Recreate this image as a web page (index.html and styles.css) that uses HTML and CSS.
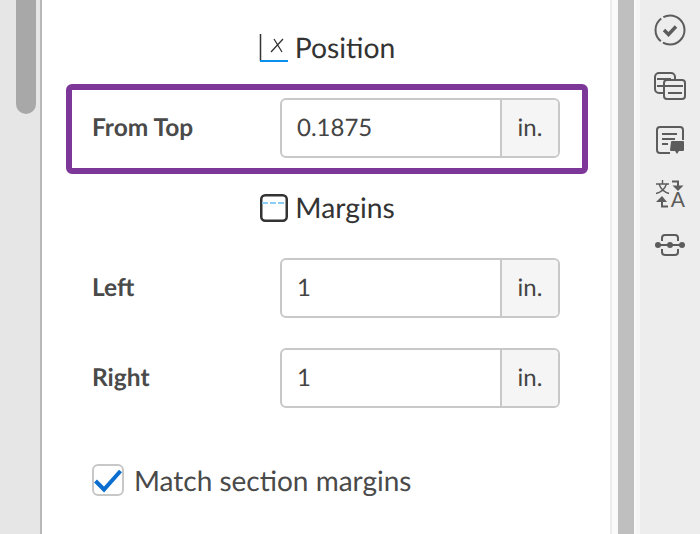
FILE: index.html
```html
<!DOCTYPE html>
<html lang="en">
<head>
    <meta charset="UTF-8">
    <title>Position and Margins</title>
    <link rel="stylesheet" href="styles.css">
</head>
<body>
    <div class="rail">
        <div class="scroll-thumb"></div>
    </div>
    <div class="panel">
        <div class="heading">
            <svg class="heading-icon" width="30" height="30" viewBox="0 0 30 30">
                <path d="M1.500 1v27" stroke="#333" stroke-width="1.500" fill="none"/>
                <path d="M1 28h28" stroke="#0a8fee" stroke-width="2" fill="none"/>
                <path d="M12 19L24 6M15 6l8 13" stroke="#333" stroke-width="1.300" fill="none"/>
            </svg>
            <span class="heading-text">Position</span>
        </div>
        <div class="highlight">
            <div class="field">
                <label class="field-label">From Top</label>
                <div class="input-group">
                    <div class="input-value">0.1875</div>
                    <div class="input-unit">in.</div>
                </div>
            </div>
        </div>
        <div class="heading heading-margins">
            <svg class="heading-icon" width="30" height="30" viewBox="0 0 30 30">
                <rect x="2.250" y="2.250" width="25.500" height="25.500" rx="4" stroke="#333" stroke-width="2.500" fill="none"/>
                <path d="M3 10h24" stroke="#8ccdf5" stroke-width="2" stroke-dasharray="6 2" fill="none"/>
            </svg>
            <span class="heading-text">Margins</span>
        </div>
        <div class="field field-plain first-plain">
            <label class="field-label">Left</label>
            <div class="input-group">
                <div class="input-value">1</div>
                <div class="input-unit">in.</div>
            </div>
        </div>
        <div class="field field-plain">
            <label class="field-label">Right</label>
            <div class="input-group">
                <div class="input-value">1</div>
                <div class="input-unit">in.</div>
            </div>
        </div>
        <div class="check-row">
            <div class="checkbox">
                <svg width="32" height="32" viewBox="0 0 32 32">
                    <path d="M3.500 17l8.500 8.500L28.500 7" stroke="#0a6ed1" stroke-width="4" fill="none"/>
                </svg>
            </div>
            <span class="check-label">Match section margins</span>
        </div>
    </div>
    <div class="gutter"><div class="gutter-bar"></div></div>
    <div class="toolbar">
        <svg class="tool" width="32" height="32" viewBox="0 0 32 32">
            <circle cx="16" cy="16" r="14.500" stroke="#5c5c5c" stroke-width="2" fill="none" stroke-dasharray="30 2.500 26 2.500 30"/>
            <path d="M10 16l4.500 4.500L22 12.500" stroke="#5c5c5c" stroke-width="3.400" fill="none"/>
        </svg>
        <svg class="tool" width="32" height="28" viewBox="0 0 32 28">
            <path d="M10 21H5a4 4 0 0 1-4-4V5a4 4 0 0 1 4-4h12a4 4 0 0 1 4 4v3" stroke="#5c5c5c" stroke-width="2" fill="none"/>
            <rect x="10" y="8" width="21" height="19" rx="3" fill="#ededed" stroke="#5c5c5c" stroke-width="2"/>
            <path d="M3 7h14M3 14h26M14 21h14" stroke="#5c5c5c" stroke-width="2" fill="none"/>
        </svg>
        <svg class="tool" width="28" height="28" viewBox="0 0 28 28">
            <path d="M14 27H4a3 3 0 0 1-3-3V4a3 3 0 0 1 3-3h20a3 3 0 0 1 3 3v10" stroke="#5c5c5c" stroke-width="2" fill="none"/>
            <path d="M6 8h15M6 13h13M6 18h6" stroke="#5c5c5c" stroke-width="2" fill="none"/>
            <path d="M15 16a1 1 0 0 1 1-1h11a1 1 0 0 1 1 1v8a1 1 0 0 1-1 1h-4l-2 3-2-3h-4a1 1 0 0 1-1-1z" fill="#5c5c5c"/>
        </svg>
        <div class="tool translate">
            <svg width="28" height="28" viewBox="0 0 28 28">
                <path d="M0 4h13M6.500 0v4M3 4c1.500 4.500 5 8 10 9.500M10.500 4C9 8.500 5.500 12 0 13.500" stroke="#5c5c5c" stroke-width="1.400" fill="none"/>
                <path d="M16 1.500h6V7" stroke="#5c5c5c" stroke-width="2" fill="none"/>
                <path d="M16.500 5.500h11L22 11z" fill="#5c5c5c"/>
                <path d="M12 26.500H6V21" stroke="#5c5c5c" stroke-width="2" fill="none"/>
                <path d="M0 22h11L6 16z" fill="#5c5c5c"/>
            </svg>
            <span class="translate-letter">A</span>
        </div>
        <svg class="tool tool-link" width="30" height="22" viewBox="0 0 30 22">
            <path d="M7 7V4a3 3 0 0 1 3-3h10a3 3 0 0 1 3 3v3M7 15v3a3 3 0 0 0 3 3h10a3 3 0 0 0 3-3v-3" stroke="#5c5c5c" stroke-width="2" fill="none"/>
            <path d="M3 11h24" stroke="#5c5c5c" stroke-width="2"/>
            <circle cx="3" cy="11" r="3" fill="#5c5c5c"/>
            <circle cx="15" cy="11" r="3" fill="#5c5c5c"/>
            <circle cx="27" cy="11" r="3" fill="#5c5c5c"/>
        </svg>
    </div>
</body>
</html>
```

FILE: styles.css
```css
body {
    margin: 0;
    display: flex;
    height: 534px;
    overflow: hidden;
    background: #fff;
    font-family: Lato, "Open Sans", sans-serif;
    color: #333;
    text-rendering: geometricPrecision;
}

.rail {
    flex: none;
    width: 24px;
    background: #e6e6e6;
    border-right: 2px solid #b8b8b8;
    padding-left: 16px;
}

.scroll-thumb {
    width: 20px;
    height: 114px;
    background: #a8a8a8;
    border-radius: 0 0 10px 10px;
}

.panel {
    width: 568px;
    flex: none;
    box-sizing: border-box;
    padding: 28px 22px 0 24px;
}

.heading {
    height: 40px;
    display: flex;
    justify-content: center;
    align-items: center;
    gap: 6px;
    font-size: 28.3px;
    color: #333;
}

.heading-icon {
    flex: none;
}

.heading-text {
    padding-bottom: 1px;
}

.highlight {
    margin-top: 16px;
    height: 90px;
    box-sizing: border-box;
    border: 6px solid #7c3799;
    border-radius: 6px;
    padding: 8px 22px 0 20px;
}

.heading-margins {
    margin-top: 14px;
}

.field {
    display: flex;
    align-items: center;
    justify-content: space-between;
}

.field-plain {
    padding: 0 28px 0 26px;
    margin-top: 30px;
}

.field-label {
    font-size: 24.5px;
    font-weight: 700;
    color: #4a4a4a;
    margin-bottom: 2px;
}

.input-group {
    width: 280px;
    height: 60px;
    box-sizing: border-box;
    display: flex;
    border: 2px solid #c8c8c8;
    border-radius: 6px;
    font-size: 24px;
    color: #444;
}

.input-value {
    flex: 1;
    padding-left: 15px;
    line-height: 56px;
}

.input-unit {
    width: 58px;
    box-sizing: border-box;
    text-align: center;
    line-height: 56px;
    background: #f5f5f5;
    border-left: 2px solid #c8c8c8;
    border-radius: 0 4px 4px 0;
}

.check-row {
    display: flex;
    align-items: center;
    gap: 10px;
    margin: 54px 0 0 26px;
    font-size: 28px;
    color: #4a4a4a;
}

.check-label {
    padding-top: 1px;
}

.checkbox {
    width: 32px;
    height: 32px;
    box-sizing: border-box;
    flex: none;
    border: 2px solid #c8c8c8;
    border-radius: 6px;
}

.checkbox svg {
    display: block;
    margin: -2px;
}

.gutter {
    width: 26px;
    flex: none;
    box-sizing: border-box;
    background: #fafafa;
    border-left: 2px solid #ececec;
    padding-left: 6px;
}

.gutter-bar {
    width: 16px;
    height: 100%;
    background: #bfbfbf;
}

.toolbar {
    flex: 1;
    box-sizing: border-box;
    background: #ededed;
    border-left: 4px solid #f6f6f6;
    display: flex;
    flex-direction: column;
    align-items: center;
    padding-top: 14px;
}

.tool {
    display: block;
    flex: none;
}

.toolbar .tool + .tool {
    margin-top: 26px;
}

.toolbar .tool-link {
    margin-top: 32px;
}

.translate {
    position: relative;
    width: 28px;
    height: 28px;
}

.translate svg {
    display: block;
}

.translate-letter {
    position: absolute;
    right: -1px;
    bottom: -3px;
    font-size: 21px;
    line-height: 22px;
    color: #5c5c5c;
}
```
